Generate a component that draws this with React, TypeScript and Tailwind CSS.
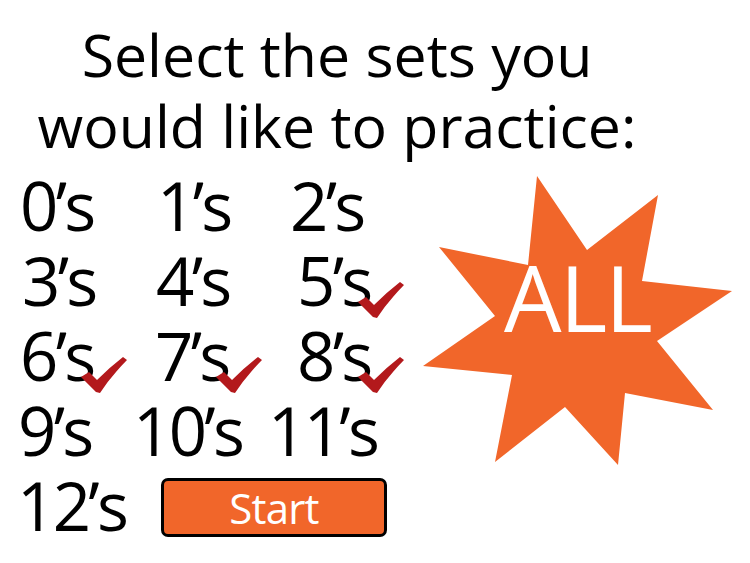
import React from 'react';

const ORANGE = '#f1662a';

// rows of times-table sets; row 5 holds 12's and the start button
const rows = [
  [0, 1, 2],
  [3, 4, 5],
  [6, 7, 8],
  [9, 10, 11],
];

const checked = new Set([5, 6, 7, 8]);

// small nudges so each label starts where the original artwork has it
const offsets: Record<number, string> = {
  0: 'ml-[1px]',
  1: 'ml-[32px]',
  2: 'ml-[33px]',
  3: 'ml-[3px]',
  4: 'ml-[31px]',
  5: 'ml-[40px]',
  6: 'ml-[1px]',
  7: 'ml-[30px]',
  8: 'ml-[40px]',
  9: 'ml-[-1px]',
  10: 'ml-[8px]',
  11: 'ml-[11px]',
  12: 'ml-[-2px]',
};

const Check: React.FC = () => (
  <svg
    className="absolute left-[calc(100%-13px)] top-[39px] w-[46px] h-[36px]"
    viewBox="0 0 46 36"
  >
    <path
      d="M0 20 L8 15 L16 23 Q29 10 42 0 L46 3 Q40 9 35 15 Q26 25 19 36 L15 35 Z"
      fill="#b3191c"
    />
  </svg>
);

const SetLabel: React.FC<{ n: number }> = ({ n }) => (
  <span className={`relative inline-block ${offsets[n]}`}>
    {n}’s
    {checked.has(n) && <Check />}
  </span>
);

const Star: React.FC = () => (
  <div className="relative w-[315px] h-[300px] mt-[12px] shrink-0">
    <svg className="w-[315px] h-[300px]" viewBox="420 180 315 300">
      <polygon
        fill={ORANGE}
        points="537,183 587,257 658,202 642,288 732,298 657,348 713,417 625,400 618,472 565,414 495,469 512,382 423,373 495,323 439,254 528,272"
      />
    </svg>
    <div className="absolute left-0 right-0 top-[79px] text-center text-white text-[91px] leading-none tracking-[-0.02em]">
      ALL
    </div>
  </div>
);

export default function App() {
  return (
    <div
      className="w-[750px] h-[563px] bg-white text-black overflow-hidden"
      style={{ fontFamily: '"Open Sans", "Noto Sans", sans-serif' }}
    >
      <h1 className="w-[674px] pt-[19px] text-center text-[59px] leading-[71px] font-normal">
        Select the sets you
        <br />
        would like to practice:
      </h1>

      <div className="flex">
        <div className="w-[420px] shrink-0 mt-[7px] pl-[19px] grid grid-cols-[106px_132px_140px] text-[67px] leading-[75px] tracking-[-0.04em]">
          {rows.map((row) =>
            row.map((n) => (
              <div key={n} className="text-left whitespace-nowrap">
                <SetLabel n={n} />
              </div>
            ))
          )}
          <div className="text-left whitespace-nowrap">
            <SetLabel n={12} />
          </div>
          <div className="col-span-2">
            <button
              className="ml-[36px] mt-[10px] w-[226px] h-[59px] rounded-[7px] border-[3px] border-black text-white text-[42px] leading-none tracking-[-0.02em] flex items-center justify-center"
              style={{ backgroundColor: ORANGE }}
            >
              Start
            </button>
          </div>
        </div>
        <Star />
      </div>
    </div>
  );
}
